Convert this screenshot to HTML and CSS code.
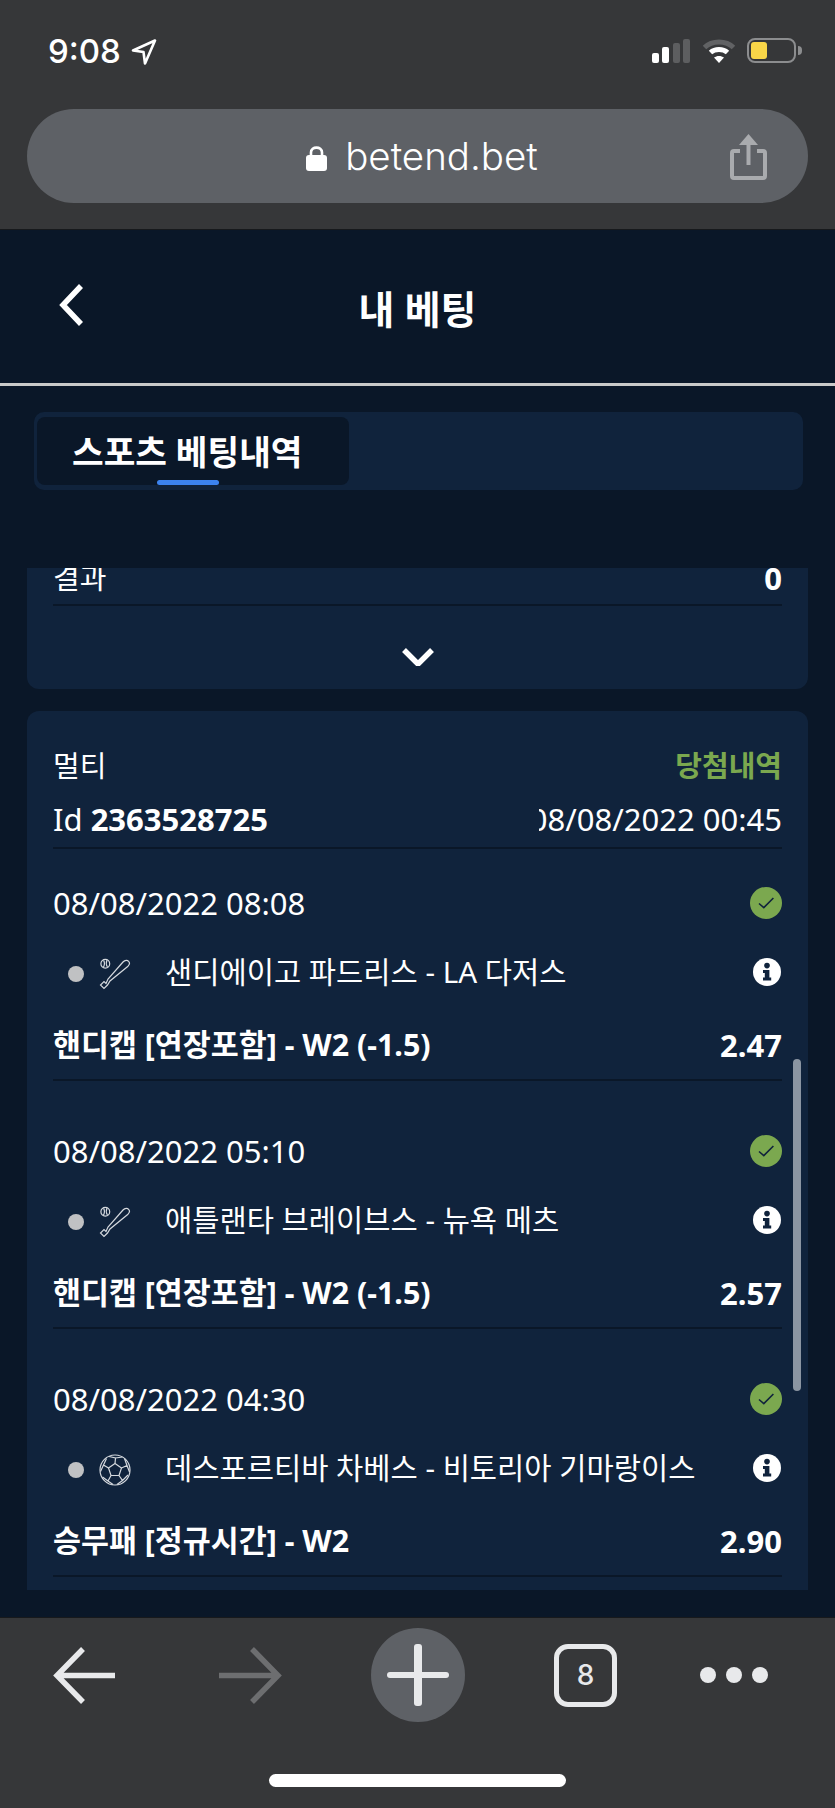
FILE: index.html
```html
<!DOCTYPE html>
<html lang="ko">
<head>
    <meta charset="UTF-8">
    <meta name="viewport" content="width=device-width, initial-scale=1.0">
    <title>내 베팅</title>
    <link rel="stylesheet" href="styles.css">
</head>
<body>

<svg class="sprites" width="0" height="0" aria-hidden="true">
    <symbol id="bat" viewBox="0 0 32 32">
        <circle cx="6.3" cy="5.7" r="4.4"/>
        <path d="M4.6 2.4 Q6.4 5.6 4.4 9.4 M8 2 Q6.4 5.6 8.4 9"/>
        <path d="M24 4 C26 2 28.4 2 29.6 3.3 C31 4.8 30.6 6.6 29 8.2 L11 23 L8.5 27 L5 30.5 L1.5 27 L5 23.5 L7 25.5 L9 21 Z"/>
    </symbol>
    <symbol id="ball" viewBox="0 0 32 32">
        <circle cx="16" cy="16" r="15"/>
        <path d="M16 9.5 L22.5 14 L20 21.5 L12 21.5 L9.5 14 Z"/>
        <path d="M16 9.5 L16.5 4 L10 2.5 M16.5 4 L23.5 3 M22.5 14 L28 11.5 L25.5 4.5 M28 11.5 L30.5 18 M20 21.5 L23.5 26.5 L29 21 M23.5 26.5 L18 30.5 M12 21.5 L9 27 L14 30.5 M9 27 L3.5 23 M9.5 14 L4.5 11 L7.5 4.5 M4.5 11 L1.5 17.5"/>
    </symbol>
    <symbol id="info" viewBox="0 0 28 28">
        <circle cx="14" cy="14" r="14" fill="#fff"/>
        <circle cx="14" cy="7.6" r="2.8" fill="#10233c"/>
        <path d="M10 12 H16.4 V19.6 H18.2 V22.6 H10 V19.6 H11.8 V15 H10 Z" fill="#10233c"/>
    </symbol>
    <symbol id="check" viewBox="0 0 32 32">
        <circle cx="16" cy="16" r="16" fill="#7ba84f"/>
        <path d="M9 16.5 L13.8 20.6 L23.4 11" fill="none" stroke="#10233c" stroke-width="1.6"/>
    </symbol>
</svg>

<div class="phone">
    <div class="browser-top">
        <div class="status-bar">
            <div class="status-left">
                <span class="clock">9:08</span>
                <svg class="location" viewBox="0 0 26 26"><path d="M2 11.5 L24 1.5 L14 24.5 L12.5 13 Z"/></svg>
            </div>
            <div class="status-right">
                <div class="signal">
                    <span class="bar on b1"></span>
                    <span class="bar on b2"></span>
                    <span class="bar b3"></span>
                    <span class="bar b4"></span>
                </div>
                <svg class="wifi" viewBox="0 0 34 25">
                    <path class="wifi-dim" d="M2.5 9.5 C10 2.2 24 2.2 31.5 9.5"/>
                    <path class="wifi-on" d="M8.5 14.5 C13 10.4 21 10.4 25.5 14.5"/>
                    <path class="wifi-dot" d="M12 19.5 C14.8 17.4 19.2 17.4 22 19.5 L17 25 Z"/>
                </svg>
                <div class="battery"><span class="battery-level"></span></div>
                <span class="battery-nub"></span>
            </div>
        </div>
        <div class="url-bar">
            <span></span>
            <div class="url">
                <svg class="lock" viewBox="0 0 21 26">
                    <path d="M5 11 V7.5 C5 1 16 1 16 7.5 V11" fill="none" stroke="#fff" stroke-width="2.6"/>
                    <rect y="10" width="21" height="16" rx="3" fill="#fff"/>
                </svg>
                <span>betend.bet</span>
            </div>
            <svg class="share" viewBox="0 0 37 47">
                <path d="M10 18 H4 Q2 18 2 20 V43 Q2 45 4 45 H33 Q35 45 35 43 V20 Q35 18 33 18 H27" fill="none" stroke="#a9abae" stroke-width="4"/>
                <path d="M18.5 32 V5" stroke="#a9abae" stroke-width="4"/>
                <path d="M9 12 L18.5 1 L28 12 Z" fill="#a9abae"/>
            </svg>
        </div>
    </div>

    <main class="page">
        <header class="page-header">
            <svg class="back" viewBox="0 0 25 42"><path d="M22 2 L4 21 L22 40"/></svg>
            <h1>내 베팅</h1>
        </header>

        <div class="tabs">
            <div class="tab active">스포츠 베팅내역</div>
        </div>

        <div class="scroll-area">
            <section class="card card-prev">
                <div class="prev-row">
                    <span class="ko">결과</span>
                    <b>0</b>
                </div>
                <div class="more">
                    <svg class="more-icon" viewBox="0 0 32 18"><path d="M2 2 L16 16 L30 2"/></svg>
                </div>
            </section>

            <section class="card">
                <div class="bet-head">
                    <div class="row">
                        <span class="ko">멀티</span>
                        <span class="ko won">당첨내역</span>
                    </div>
                    <div class="row row-id">
                        <span>Id <b>2363528725</b></span>
                        <span class="bet-date"><span>08/08/2022 00:45</span></span>
                    </div>
                </div>

                <div class="item">
                    <div class="row">
                        <span>08/08/2022 08:08</span>
                        <svg class="check"><use href="#check"/></svg>
                    </div>
                    <div class="row row-match">
                        <span class="dot"></span>
                        <svg class="sport"><use href="#bat"/></svg>
                        <span class="match">샌디에이고 파드리스 - LA 다저스</span>
                        <svg class="info"><use href="#info"/></svg>
                    </div>
                    <div class="row row-market">
                        <b>핸디캡 [연장포함] - W2 (-1.5)</b>
                        <b class="odds">2.47</b>
                    </div>
                </div>

                <div class="item">
                    <div class="row">
                        <span>08/08/2022 05:10</span>
                        <svg class="check"><use href="#check"/></svg>
                    </div>
                    <div class="row row-match">
                        <span class="dot"></span>
                        <svg class="sport"><use href="#bat"/></svg>
                        <span class="match">애틀랜타 브레이브스 - 뉴욕 메츠</span>
                        <svg class="info"><use href="#info"/></svg>
                    </div>
                    <div class="row row-market">
                        <b>핸디캡 [연장포함] - W2 (-1.5)</b>
                        <b class="odds">2.57</b>
                    </div>
                </div>

                <div class="item">
                    <div class="row">
                        <span>08/08/2022 04:30</span>
                        <svg class="check"><use href="#check"/></svg>
                    </div>
                    <div class="row row-match">
                        <span class="dot"></span>
                        <svg class="sport"><use href="#ball"/></svg>
                        <span class="match">데스포르티바 차베스 - 비토리아 기마랑이스</span>
                        <svg class="info"><use href="#info"/></svg>
                    </div>
                    <div class="row row-market">
                        <b>승무패 [정규시간] - W2</b>
                        <b class="odds">2.90</b>
                    </div>
                </div>
            </section>

            <div class="scroll-thumb"></div>
        </div>
    </main>

    <footer class="browser-bottom">
        <nav class="nav">
            <svg class="nav-arrow" viewBox="0 0 62 57"><path d="M30 2 L4 28.5 L30 55 M4 28.5 H62"/></svg>
            <svg class="nav-arrow nav-forward" viewBox="0 0 63 57"><path d="M33 2 L59 28.5 L33 55 M59 28.5 H0"/></svg>
            <div class="nav-plus"><span class="plus-h"></span><span class="plus-v"></span></div>
            <div class="nav-tabs">8</div>
            <div class="nav-more"><span></span><span></span><span></span></div>
        </nav>
        <div class="home-indicator"></div>
    </footer>
</div>

</body>
</html>
```

FILE: styles.css
```css
* {
    box-sizing: border-box;
}
body {
    margin: 0;
    background-color: #363739;
    font-family: "Noto Sans", "Noto Sans CJK KR", sans-serif;
    color: #fff;
}
.sprites {
    display: block;
    height: 0;
}
.phone {
    width: 835px;
    height: 1808px;
    display: flex;
    flex-direction: column;
    overflow: hidden;
}

/* top of the browser */
.browser-top {
    height: 230px;
    padding: 33px 27px 0;
    background-color: #363739;
    border-bottom: 1px solid #17191c;
}
.status-bar {
    height: 76px;
    display: flex;
    justify-content: space-between;
    align-items: flex-start;
    padding: 0 0 0 21px;
}
.status-left {
    display: flex;
    align-items: center;
    gap: 10px;
}
.clock {
    font-family: Inter, sans-serif;
    font-size: 33px;
    font-weight: 500;
    line-height: 36px;
}
.location {
    width: 26px;
    height: 26px;
    margin-top: 1px;
}
.location path {
    fill: none;
    stroke: #fff;
    stroke-width: 2.6;
    stroke-linejoin: round;
}
.status-right {
    display: flex;
    align-items: flex-end;
    padding-top: 6px;
    margin-right: 6px;
    height: 30px;
}
.signal {
    display: flex;
    align-items: flex-end;
    gap: 3.5px;
    height: 24px;
    margin-right: 12px;
}
.bar {
    display: block;
    width: 7px;
    border-radius: 2px;
    background-color: #5d5e60;
}
.bar.on {
    background-color: #fff;
}
.b1 { height: 10px; }
.b2 { height: 16px; }
.b3 { height: 20px; }
.b4 { height: 24px; }
.wifi {
    width: 34px;
    height: 25px;
    margin-right: 11px;
}
.wifi path {
    fill: none;
    stroke-width: 5;
}
.wifi .wifi-dim {
    stroke: #616264;
}
.wifi .wifi-on {
    stroke: #fff;
}
.wifi .wifi-dot {
    fill: #fff;
    stroke: none;
}
.battery {
    width: 49px;
    height: 25px;
    border: 2px solid #8c8d8f;
    border-radius: 8px;
    padding: 2px;
}
.battery-level {
    display: block;
    width: 16px;
    height: 17px;
    border-radius: 3px;
    background-color: #f9d648;
}
.battery-nub {
    width: 4px;
    height: 9px;
    margin: 0 0 8px 2px;
    border-radius: 0 4px 4px 0;
    background-color: #8c8d8f;
}

.url-bar {
    height: 94px;
    border-radius: 47px;
    background-color: #5e6166;
    display: grid;
    grid-template-columns: 1fr auto 1fr;
    align-items: center;
}
.url {
    display: flex;
    align-items: center;
    gap: 18px;
    font-family: Inter, sans-serif;
    font-size: 38.5px;
    font-weight: 300;
    line-height: 44px;
    margin-left: 9px;
}
.lock {
    width: 21px;
    height: 26px;
    margin-top: 4px;
}
.share {
    width: 37px;
    height: 47px;
    justify-self: end;
    margin-right: 41px;
}

/* page */
.page {
    flex: 1;
    min-height: 0;
    background-color: #0a1728;
    display: flex;
    flex-direction: column;
}
.page-header {
    height: 156px;
    flex-shrink: 0;
    position: relative;
    display: flex;
    align-items: center;
    justify-content: center;
    border-bottom: 3px solid #c9cac9;
}
.page-header h1 {
    margin: 4px 0 0;
    font-size: 39px;
    font-weight: 700;
    line-height: 50px;
}
.back {
    position: absolute;
    left: 59px;
    top: 54px;
    width: 25px;
    height: 42px;
}
.back path,
.more-icon path {
    fill: none;
    stroke: #fff;
    stroke-width: 5.5;
}
.tabs {
    height: 78px;
    flex-shrink: 0;
    margin: 26px 32px 0 34px;
    padding: 5px 3px;
    border-radius: 10px;
    background-color: #10233c;
}
.tab {
    width: 312px;
    height: 68px;
    position: relative;
    padding: 15px 0 0 35px;
    border-radius: 8px;
    font-size: 34.4px;
    font-weight: 700;
    line-height: 40px;
    white-space: nowrap;
}
.tab.active {
    background-color: #0a1728;
}
.tab.active::after {
    content: "";
    position: absolute;
    left: 120px;
    bottom: 0;
    width: 62px;
    height: 5px;
    border-radius: 3px;
    background-color: #3c83ef;
}

.scroll-area {
    height: 1022px;
    flex-shrink: 0;
    margin: 78px 27px 0;
    overflow: hidden;
    position: relative;
}
.card {
    padding: 0 26px 40px;
    background-color: #10233c;
    border-radius: 12px;
    font-size: 31px;
    line-height: 40px;
}
.ko {
    font-size: 29px;
}
.card-prev {
    height: 121px;
    padding-bottom: 0;
    border-radius: 0 0 12px 12px;
    margin-bottom: 22px;
    overflow: hidden;
}
.prev-row {
    height: 50px;
    margin-top: -12px;
    display: flex;
    justify-content: space-between;
    border-bottom: 2px solid #0a1728;
    padding-top: 2px;
    overflow: hidden;
}
.more {
    height: 83px;
    display: flex;
    align-items: center;
    justify-content: center;
    padding-top: 18px;
}
.more-icon {
    width: 32px;
    height: 18px;
}

.row {
    display: flex;
    justify-content: space-between;
    align-items: center;
    height: 40px;
    white-space: nowrap;
}
.bet-head {
    padding: 35px 0 8px;
    border-bottom: 2px solid #0a1728;
}
.won {
    color: #7ba84f;
    font-weight: 700;
}
.row-id {
    margin-top: 13px;
}
.bet-date {
    width: 243px;
    display: flex;
    justify-content: flex-end;
    overflow: hidden;
}
.item {
    padding: 34px 0 14px;
    margin-bottom: 16px;
    border-bottom: 2px solid #0a1728;
}
.check {
    width: 32px;
    height: 32px;
}
.row-match {
    margin-top: 29px;
    padding-left: 15px;
    justify-content: flex-start;
}
.dot {
    width: 16px;
    height: 16px;
    margin-top: 4px;
    border-radius: 50%;
    background-color: #c0c1c3;
}
.sport {
    width: 32px;
    height: 32px;
    margin: 4px 34px 0 15px;
    fill: none;
    stroke: #d5d9de;
    stroke-width: 1.2;
}
.match {
    flex: 1;
    font-size: 29.6px;
}
.info {
    width: 28px;
    height: 28px;
    margin-right: 1px;
}
.row-market {
    margin-top: 33px;
    font-size: 30.4px;
}
.odds {
    font-size: 31px;
}
.scroll-thumb {
    position: absolute;
    right: 7px;
    top: 491px;
    width: 8px;
    height: 332px;
    border-radius: 4px;
    background-color: #8b95a2;
}

/* bottom of the browser */
.browser-bottom {
    height: 191px;
    flex-shrink: 0;
    background-color: #363739;
    border-top: 1px solid #17191c;
    padding-top: 10px;
}
.nav {
    height: 94px;
    display: flex;
    align-items: center;
    padding-left: 53px;
}
.nav-arrow {
    width: 62px;
    height: 57px;
}
.nav-arrow path {
    fill: none;
    stroke: #e8e9eb;
    stroke-width: 5.5;
}
.nav-forward {
    width: 63px;
    margin-left: 104px;
}
.nav-forward path {
    stroke: #6d6e70;
}
.nav-plus {
    width: 94px;
    height: 94px;
    margin-left: 89px;
    border-radius: 50%;
    background-color: #5e6166;
    position: relative;
}
.plus-h,
.plus-v {
    position: absolute;
    background-color: #e8e9eb;
    border-radius: 3px;
}
.plus-h {
    left: 16px;
    top: 44px;
    width: 62px;
    height: 6px;
}
.plus-v {
    left: 43px;
    top: 16px;
    width: 8px;
    height: 62px;
}
.nav-tabs {
    width: 63px;
    height: 63px;
    margin-left: 89px;
    border: 5px solid #e8e9eb;
    border-radius: 14px;
    display: flex;
    align-items: center;
    justify-content: center;
    color: #e8e9eb;
    font-family: Inter, sans-serif;
    font-size: 28px;
    font-weight: 500;
}
.nav-more {
    display: flex;
    gap: 10px;
    margin-left: 83px;
}
.nav-more span {
    width: 16px;
    height: 16px;
    border-radius: 50%;
    background-color: #e8e9eb;
}
.home-indicator {
    width: 297px;
    height: 13px;
    margin: 52px 0 0 269px;
    border-radius: 7px;
    background-color: #fff;
}
```
